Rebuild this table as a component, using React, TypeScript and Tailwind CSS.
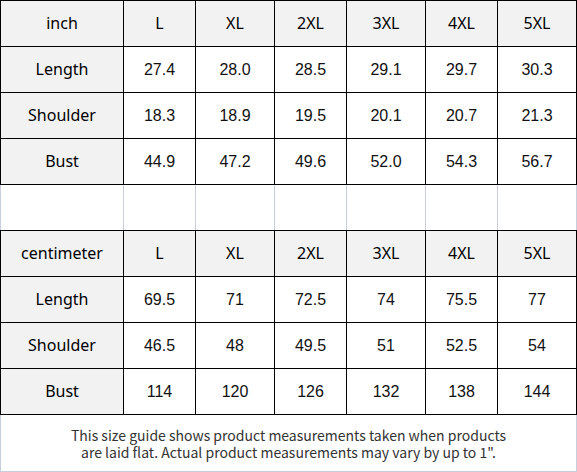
const sizes = ['L', 'XL', '2XL', '3XL', '4XL', '5XL'];

const inchRows = [
  { label: 'Length', values: ['27.4', '28.0', '28.5', '29.1', '29.7', '30.3'] },
  { label: 'Shoulder', values: ['18.3', '18.9', '19.5', '20.1', '20.7', '21.3'] },
  { label: 'Bust', values: ['44.9', '47.2', '49.6', '52.0', '54.3', '56.7'] },
];

const cmRows = [
  { label: 'Length', values: ['69.5', '71', '72.5', '74', '75.5', '77'] },
  { label: 'Shoulder', values: ['46.5', '48', '49.5', '51', '52.5', '54'] },
  { label: 'Bust', values: ['114', '120', '126', '132', '138', '144'] },
];

const cols = 'grid grid-cols-[122px_71px_78px_71px_78px_71px_78px]';
const label = "flex h-[45px] items-center justify-center bg-[#f2f2f2] pb-px text-[16px] text-black [font-family:'Noto_Sans',sans-serif]";
const num = "flex h-[45px] items-center justify-center bg-white text-[16px] text-[#111] [font-family:'Liberation_Sans',Arial,sans-serif]";

function SizeTable({ unit, rows }: { unit: string; rows: { label: string; values: string[] }[] }) {
  return (
    <div className={`${cols} gap-px bg-black p-px`}>
      <div className={label}>{unit}</div>
      {sizes.map((s) => (
        <div key={s} className={label}>
          {s}
        </div>
      ))}
      {rows.map((r) => (
        <div key={r.label} className="contents">
          <div className={label}>{r.label}</div>
          {r.values.map((v, i) => (
            <div key={i} className={num}>
              {v}
            </div>
          ))}
        </div>
      ))}
    </div>
  );
}

export default function App() {
  return (
    <div className="w-[577px] bg-white">
      <SizeTable unit="inch" rows={inchRows} />
      <div className={`${cols} gap-x-px bg-[#c6cfdc] px-px`}>
        {Array.from({ length: 7 }).map((_, i) => (
          <div key={i} className="h-[45px] bg-white" />
        ))}
      </div>
      <SizeTable unit="centimeter" rows={cmRows} />
      <div className="flex h-[57px] flex-col items-center justify-center border-x border-b border-[#c6cfdc] pt-px text-center text-[14px] leading-[17px] text-[#333] [font-family:'Noto_Sans_CJK_SC',sans-serif]">
        <p>This size guide shows product measurements taken when products</p>
        <p>are laid flat. Actual product measurements may vary by up to 1".</p>
      </div>
    </div>
  );
}
